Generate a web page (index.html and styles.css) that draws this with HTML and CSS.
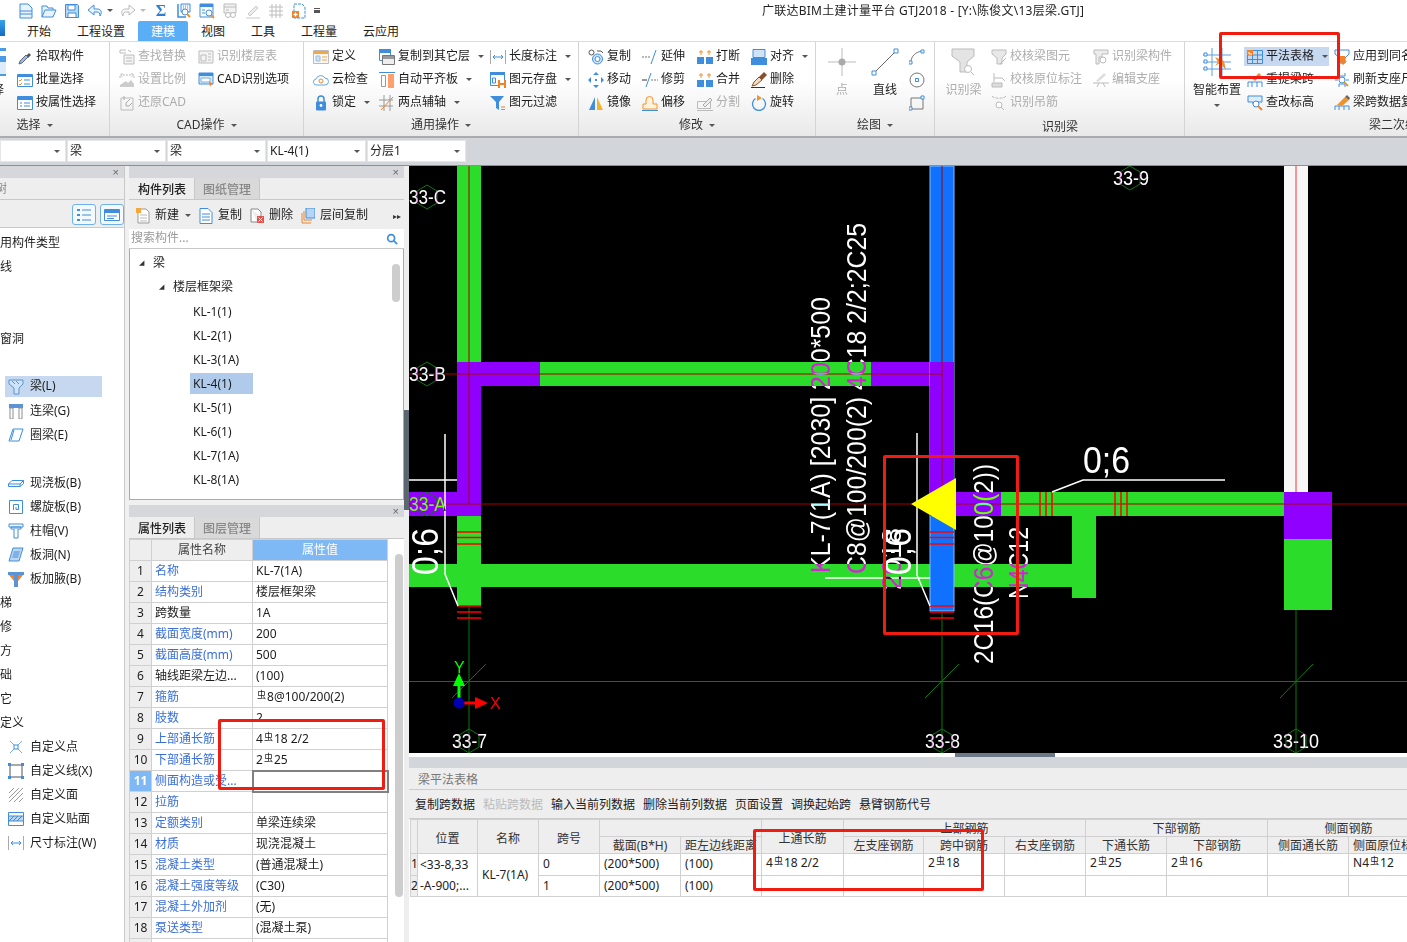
FILE: index.html
```html
<!DOCTYPE html>
<html lang="zh-CN">
<head>
<meta charset="utf-8">
<title>广联达BIM土建计量平台 GTJ2018</title>
<link rel="stylesheet" href="styles.css">
</head>
<body>
<svg class="sprite" aria-hidden="true">
  <defs>
    <symbol id="q-new" viewBox="0 0 16 16"><path d="M2 1h8l4 4v10H2z" fill="#eaf3fc" stroke="#3e8edd"/><path d="M2 8h12M2 11h12" stroke="#3e8edd"/></symbol>
    <symbol id="q-open" viewBox="0 0 16 16"><path d="M1 14V3h5l1 2h5v2M1 14l3-7h11l-3 7z" fill="#eaf3fc" stroke="#3e8edd"/></symbol>
    <symbol id="q-save" viewBox="0 0 16 16"><path d="M1.500 1.500h12l1 1v12h-13z" fill="#b8d8f5" stroke="#3e8edd"/><path d="M4 2h7v5H4zM4 10h8v4.500H4z" fill="#fff" stroke="#3e8edd"/></symbol>
    <symbol id="q-undo" viewBox="0 0 16 16"><path d="M7 2 1 7l6 5V9h3c2 0 3 1 3 4 2-3 2-7-3-7H7z" fill="#eaf3fc" stroke="#3e8edd"/></symbol>
    <symbol id="q-redo" viewBox="0 0 16 16"><path d="M9 2l6 5-6 5V9H6c-2 0-3 1-3 4-2-3-2-7 3-7h3z" fill="#fafafa" stroke="#bbb"/></symbol>
    <symbol id="q-rep" viewBox="0 0 16 16"><path d="M2 1v13h8" fill="none" stroke="#3e8edd" stroke-width="1.500"/><path d="M5 1h9v8H5z" fill="#f4f8fc" stroke="#3e8edd"/><path d="M7 3h5M7 5h5" stroke="#d66" stroke-dasharray="1 1"/><circle cx="9" cy="9" r="3" fill="#fff" stroke="#3e8edd"/><path d="m11 11 3 3" stroke="#f0922e" stroke-width="2"/></symbol>
    <symbol id="q-find" viewBox="0 0 16 16"><path d="M1 1h13v13H1z" fill="#fff" stroke="#3e8edd"/><path d="M1 1h13v3H1z" fill="#3e8edd"/><path d="M3 7h3M3 10h3" stroke="#3e8edd"/><circle cx="10" cy="10" r="3" fill="#fff" stroke="#3e8edd"/><path d="m12 12 3 3" stroke="#f0922e" stroke-width="2"/></symbol>
    <symbol id="q-dis" viewBox="0 0 16 16"><path d="M2 1h12v9H2z" fill="#f2f2f2" stroke="#bbb"/><path d="M2 4h12M4 7h3" stroke="#bbb"/><circle cx="6" cy="12" r="2.500" fill="#fff" stroke="#bbb"/><circle cx="11" cy="12" r="2.500" fill="#fff" stroke="#bbb"/></symbol>
    <symbol id="q-pen" viewBox="0 0 16 16"><path d="m3 11 8-8 2 2-8 8zM1 15h14" fill="#eee" stroke="#c8c8c8"/></symbol>
    <symbol id="q-grid" viewBox="0 0 16 16"><path d="M1 4h14M1 8h14M1 12h14M4 1v14M8 1v14M12 1v14" stroke="#bdbdbd"/></symbol>
    <symbol id="q-add" viewBox="0 0 16 16"><path d="M3 1h8l3 3v11H3z" fill="#fff" stroke="#3e8edd" stroke-dasharray="3 1"/><path d="M1 8h7v7H1z" fill="#f0822a"/><path d="M4.500 9.500v4M2.500 11.500h4" stroke="#fff" stroke-width="1.300"/></symbol>

    <symbol id="i-drop" viewBox="0 0 16 16"><path d="m9 7 3-3 2 2-3 3z" fill="#555"/><path d="M9 6 3 12l-1 3 3-1 6-6z" fill="#8fc0ee" stroke="#667"/></symbol>
    <symbol id="i-batch" viewBox="0 0 16 16"><path d="M.500 2.500h15v12H.500z" fill="#fff" stroke="#3e8edd"/><path d="M1 3h14v2H1z" fill="#3e8edd"/><path d="m2 8 1 1 2-2M2 12l1 1 2-2" fill="none" stroke="#f0922e"/><path d="M7 8h6M7 12h6" stroke="#3e8edd"/></symbol>
    <symbol id="i-attr" viewBox="0 0 16 16"><path d="M.500 1.500h15v13H.500z" fill="#fff" stroke="#3e8edd"/><path d="M1 2h14v3H1z" fill="#3e8edd"/><path d="M3 8h2M3 11h2M7 8h6M7 11h6" stroke="#3e8edd"/></symbol>
    <symbol id="i-find" viewBox="0 0 16 16"><path d="M1 1h6M1 1v3h6M9 1l3 2" fill="none" stroke="#bbb"/><path d="M5 6h10v9H5z" fill="#f4f4f4" stroke="#bbb"/><path d="M7 9h6M7 12h6" stroke="#bbb"/></symbol>
    <symbol id="i-scale" viewBox="0 0 16 16"><path d="M1 15h14v-3l-3-4-3 3-2-2-6 4z" fill="#ccc"/><path d="M1 6V3h14v3M3 1v4M13 1v4" fill="none" stroke="#bbb" stroke-dasharray="2 1"/></symbol>
    <symbol id="i-restore" viewBox="0 0 16 16"><path d="M2 3h12v12H2z" fill="none" stroke="#bbb"/><path d="M11 4 7 8v3h3l3-3M5 1v4" fill="none" stroke="#aaa"/></symbol>
    <symbol id="i-floor" viewBox="0 0 16 16"><path d="M1 2h14v12H1z" fill="#f4f4f4" stroke="#bbb"/><path d="M3 6h5v6H3zM10 5h3M10 8h3M10 11h3" fill="none" stroke="#bbb"/></symbol>
    <symbol id="i-cad" viewBox="0 0 16 16"><path d="M1 1h14v11H1z" fill="#dcecfa" stroke="#3e8edd"/><path d="M1 1h14v3H1z" fill="#3e8edd"/><path d="M3 6h9v4H3z" fill="#fff" stroke="#7aaee0"/><path d="m11 9 4 3-2 1-1 2z" fill="#f0822a"/></symbol>
    <symbol id="i-def" viewBox="0 0 16 16"><path d="M.500 1.500h15v13H.500z" fill="#f7f7f7" stroke="#bbb"/><path d="M1 2h14v3H1z" fill="#f5a63c"/><path d="M3 7h4v5H3z" fill="#cfe3f6" stroke="#9bbfe0"/><path d="M9 8h5M9 11h5" stroke="#f5a63c"/></symbol>
    <symbol id="i-cloud" viewBox="0 0 16 16"><path d="M4 13a3 3 0 0 1-1-6 5 5 0 0 1 9-1 3.500 3.500 0 0 1 0 7z" fill="#fff" stroke="#60a8ea"/><circle cx="8" cy="9" r="2" fill="none" stroke="#f0822a"/></symbol>
    <symbol id="i-lock" viewBox="0 0 16 16"><path d="M5 7V4a3 3 0 0 1 6 0v3" fill="none" stroke="#3e8edd" stroke-width="1.500"/><rect x="3" y="6.500" width="10" height="9" rx="1" fill="#3e8edd"/><circle cx="8" cy="10.500" r="1.400" fill="#fff"/></symbol>
    <symbol id="i-copyfloor" viewBox="0 0 16 16"><path d="M.500.500h11v11H.500z" fill="#fff" stroke="#3e8edd"/><path d="M0 0h12v4H0z" fill="#3e8edd"/><path d="M3.500 6.500h12v9h-12z" fill="#eee" stroke="#777"/><path d="M4 7h11v3H4z" fill="#999"/></symbol>
    <symbol id="i-align" viewBox="0 0 16 16"><path d="M0 .500h16" stroke="#3e8edd"/><path d="M2.500 3.500h4v11h-4z" fill="#fff" stroke="#999"/><path d="M9 2h6v14H9z" fill="#ff9f6e"/></symbol>
    <symbol id="i-axis" viewBox="0 0 16 16"><path d="M0 5h14M0 11h14M5 0v16M11 0v16" stroke="#999"/><path d="m2 15 12-13" stroke="#f0822a"/></symbol>
    <symbol id="i-dim" viewBox="0 0 16 16"><path d="M.500 1v14M15.500 1v14" stroke="#aaa"/><path d="M3 8h10M3 8l2-2M3 8l2 2M13 8l-2-2M13 8l-2 2" fill="none" stroke="#3e8edd"/></symbol>
    <symbol id="i-store" viewBox="0 0 16 16"><path d="M.500.500h14v13h-14z" fill="#fff" stroke="#3e8edd"/><path d="M0 0h15v3H0z" fill="#3e8edd"/><path d="M2.500 6h3v5h-3z" fill="none" stroke="#3e8edd"/><path d="M8 8h8v8H8z" fill="#f0822a"/><path d="M10 8h4v3h-4zM10 13h4v3h-4z" fill="#fff"/></symbol>
    <symbol id="i-filter" viewBox="0 0 16 16"><path d="M0 1h14L9 7v8l-3-2V7z" fill="#3e8edd"/><path d="M11 12h4M11 14.500h4" stroke="#f0822a"/></symbol>
    <symbol id="i-copy" viewBox="0 0 16 16"><circle cx="3.500" cy="3.500" r="2.500" fill="none" stroke="#555"/><path d="M9 2h4l2 2" fill="none" stroke="#555"/><circle cx="9.500" cy="10" r="5" fill="#cfe3f6" stroke="#3e8edd"/><circle cx="9.500" cy="10" r="2.500" fill="#fff" stroke="#3e8edd"/></symbol>
    <symbol id="i-move" viewBox="0 0 16 16"><path d="M8 0l3 3H5zM8 16l3-3H5zM0 8l3-3v6zM16 8l-3-3v6z" fill="#3e8edd"/><path d="M7 7h2v2H7z" fill="#3e8edd"/></symbol>
    <symbol id="i-mirror" viewBox="0 0 16 16"><path d="M1 15 7 2v13z" fill="#3e8edd"/><path d="M9 2l6 13H9z" fill="#f5b32a"/></symbol>
    <symbol id="i-extend" viewBox="0 0 16 16"><path d="M0 8h9" stroke="#777" stroke-dasharray="2 1"/><path d="m9 15 5-14" stroke="#3e8edd"/></symbol>
    <symbol id="i-trim" viewBox="0 0 16 16"><path d="M0 8h5" stroke="#333"/><path d="M9 8h7" stroke="#777" stroke-dasharray="2 1"/><path d="M4 15 9 1" stroke="#3e8edd"/></symbol>
    <symbol id="i-offset" viewBox="0 0 16 16"><path d="M1 14V9h3V5a3 3 0 0 1 7 0v4h4v5z" fill="#fff3dc" stroke="#f0922e"/><path d="M0 15.500h16" stroke="#3e8edd"/></symbol>
    <symbol id="i-break" viewBox="0 0 16 16"><path d="M0 8h7v7H0zM9 8h7v7H9z" fill="#3e8edd"/><path d="M4 1v5M2 3h4M12 1v5M10 3h4" stroke="#f0922e"/></symbol>
    <symbol id="i-split" viewBox="0 0 16 16"><path d="M.500 6.500h13v7h-13zM0 15.500h16" fill="none" stroke="#bbb"/><path d="m6 10 7-7 2 2-7 7z" fill="#eee" stroke="#aaa"/></symbol>
    <symbol id="i-alignb" viewBox="0 0 16 16"><path d="M2 .500h12v8H2z" fill="#cfe3f6" stroke="#3e8edd"/><path d="M0 9h16v7H0z" fill="#3e8edd"/></symbol>
    <symbol id="i-del" viewBox="0 0 16 16"><path d="m8 5 5-5 3 3-5 5z" fill="#8a4f2a"/><path d="M8 5 3 10l-2 4 4-1 6-5z" fill="#f4dcc0" stroke="#8a4f2a"/><path d="M0 15.500h14" stroke="#333"/></symbol>
    <symbol id="i-rot" viewBox="0 0 16 16"><path d="M4.500 3.500a6.500 6.500 0 1 0 7 0" fill="none" stroke="#3e8edd" stroke-width="1.300"/><path d="M6 0l5 3-5 3z" fill="#f0922e"/></symbol>

    <symbol id="b-point" viewBox="0 0 28 28"><path d="M14 0v28M0 14h28" stroke="#bbb"/><circle cx="14" cy="14" r="3.500" fill="#aaa"/></symbol>
    <symbol id="b-line" viewBox="0 0 28 28"><path d="M3 25 25 3" stroke="#666"/><path d="M1 23h4v4H1zM23 1h4v4h-4z" fill="#fff" stroke="#3e8edd"/></symbol>
    <symbol id="i-arc" viewBox="0 0 16 16"><path d="M2 13C2 7 7 3 13 2" fill="none" stroke="#777"/><path d="M0 12h3v3H0zM12 1h3v3h-3z" fill="#fff" stroke="#3e8edd"/></symbol>
    <symbol id="i-circle" viewBox="0 0 16 16"><circle cx="8" cy="8" r="7" fill="none" stroke="#777"/><path d="M6.500 6.500h3v3h-3z" fill="#fff" stroke="#3e8edd"/></symbol>
    <symbol id="i-rect" viewBox="0 0 16 16"><path d="M2 3h12v11H2z" fill="none" stroke="#777"/><path d="M0 12h3v3H0zM12 1h3v3h-3z" fill="#fff" stroke="#3e8edd"/></symbol>
    <symbol id="b-recog" viewBox="0 0 28 28"><path d="M2 1h22v7l-7 6v10h-7V14L2 8z" fill="#e4e4e4" stroke="#bbb"/><circle cx="18" cy="21" r="3.500" fill="#fff" stroke="#bbb"/><path d="m21 24 3 3" stroke="#bbb"/></symbol>
    <symbol id="i-chk" viewBox="0 0 16 16"><path d="M1 1h14v4l-4 4v6H6V9L1 5z" fill="#e8e8e8" stroke="#bbb"/><path d="M9 15l6-6" stroke="#bbb"/></symbol>
    <symbol id="i-chk2" viewBox="0 0 16 16"><path d="M1 11h10v4H1z" fill="#ddd" stroke="#bbb"/><path d="M3 10V1M3 6h8l3 3" fill="none" stroke="#bbb"/></symbol>
    <symbol id="i-hang" viewBox="0 0 16 16"><path d="M1 1c2 3 12 3 14 0" fill="none" stroke="#bbb" stroke-dasharray="3 1"/><circle cx="8" cy="10" r="3" fill="#fff" stroke="#bbb"/><path d="m10 12 3 3" stroke="#bbb"/></symbol>
    <symbol id="i-mem" viewBox="0 0 16 16"><path d="M1 1h14v4H9v3H6v7H3V5H1z" fill="#ececec" stroke="#bbb"/><circle cx="10" cy="11" r="3" fill="#fff" stroke="#bbb"/></symbol>
    <symbol id="i-sup" viewBox="0 0 16 16"><path d="M0 11h16M4 15l2-4M12 15l-2-4" stroke="#bbb"/><path d="m3 9 8-8 2 2-8 7z" fill="#ddd"/></symbol>
    <symbol id="b-smart" viewBox="0 0 28 28"><path d="M0 7h28M0 14h28M0 21h28M9 0v28M19 0v28" stroke="#5aa0e4"/><path d="M1 5h3v3H1zM1 12h3v3H1zM1 19h3v3H1z" fill="#fff" stroke="#3e8edd"/><path d="M12 9l3 5-3 4 5-3 6 7-2-9z" fill="#f0922e"/></symbol>
    <symbol id="i-table" viewBox="0 0 16 16"><path d="M.500 1.500h15v13H.500zM5.500 1.500v13M10.500 1.500v13M.500 6h15M.500 10.500h15" fill="none" stroke="#3e8edd"/><path d="M0 1h6v5H0z" fill="#f0822a"/><path d="M2 3v2h3" fill="none" stroke="#fff"/></symbol>
    <symbol id="i-span" viewBox="0 0 16 16"><path d="m6 7 6-6 2 2-6 6z" fill="#f0822a"/><path d="M1 15v-5h14v5M5 10v5M10 10v5" fill="none" stroke="#3e8edd"/></symbol>
    <symbol id="i-height" viewBox="0 0 16 16"><path d="M1 1h14v6H9v5L6 9V7H1z" fill="#dcecfa" stroke="#3e8edd"/><circle cx="9" cy="9" r="3" fill="#fff" stroke="#3e8edd"/><path d="m11 11 4 4" stroke="#f0822a" stroke-width="2"/></symbol>
    <symbol id="i-apply" viewBox="0 0 16 16"><path d="M1 1h14v4l-4 4v5H6V9L1 5z" fill="#fff" stroke="#3e8edd"/><path d="M6 7h5v5h2l-4 4-4-4h1z" fill="#f0822a"/></symbol>
    <symbol id="i-refresh" viewBox="0 0 16 16"><path d="M5 1v3h6V1M1 8h3M12 8h3M5 15v-3h6v3" fill="none" stroke="#3e8edd"/><circle cx="8" cy="8" r="3" fill="#fff" stroke="#3e8edd"/><path d="m10 10 4 4" stroke="#f0922e" stroke-width="2"/></symbol>
    <symbol id="i-data" viewBox="0 0 16 16"><path d="M1 15v-4h14v4M5 11v4M10 11v4" fill="none" stroke="#3e8edd"/><path d="m3 10 8-8 4 3-7 6z" fill="#f0922e"/><path d="m11 2 2-2 3 3-1 2z" fill="#666"/></symbol>

    <symbol id="n-beam" viewBox="0 0 16 16"><path d="M1 1h14v4l-4 4v6H6V9L1 5z" fill="#cfe3f6" stroke="#5b93d6"/><path d="M4 2l3 3M8 2l3 3" stroke="#5b93d6"/></symbol>
    <symbol id="n-link" viewBox="0 0 16 16"><path d="M1 1h14v4H1z" fill="#5b93d6"/><path d="M2 5h3v11H2zM11 5h3v11h-3z" fill="#fff" stroke="#8a8f96"/></symbol>
    <symbol id="n-ring" viewBox="0 0 16 16"><path d="M5 2h10l-4 12H1z" fill="#fff" stroke="#3e8edd"/><path d="M6 3 3 13" stroke="#3e8edd"/></symbol>
    <symbol id="n-slab" viewBox="0 0 16 16"><path d="M.500 9 4 5.500h11.500v3L12 11.500H.500zM.500 9H12v2.500M12 9l3.500-3.500" fill="#fff" stroke="#3e8edd"/></symbol>
    <symbol id="n-spiral" viewBox="0 0 16 16"><path d="M1.500 1.500h13v13h-13zM5.500 11V5.500h5v5H8V8" fill="none" stroke="#3e8edd"/></symbol>
    <symbol id="n-cap" viewBox="0 0 16 16"><path d="M1 1h14v3H1zM3 4h10v2H3z" fill="#fff" stroke="#3e8edd"/><path d="M6 6v9h4V6" fill="#fff" stroke="#3e8edd"/></symbol>
    <symbol id="n-hole" viewBox="0 0 16 16"><path d="M5 1h10l-4 13H1z" fill="#bcd6f1" stroke="#3e8edd"/><path d="M6 4h6l-2 7H4z" fill="#7fb0e6"/></symbol>
    <symbol id="n-haunch" viewBox="0 0 16 16"><path d="M0 1h16v3H0zM6 4h4v12H6z" fill="#5b93d6"/><path d="M1 4h5v6zM15 4h-5v6z" fill="#f0822a"/></symbol>
    <symbol id="n-cpt" viewBox="0 0 16 16"><path d="m2 2 12 12M14 2 2 14" stroke="#7aaee0"/><rect x="6" y="6" width="4" height="4" fill="#fff" stroke="#3e8edd"/></symbol>
    <symbol id="n-cln" viewBox="0 0 16 16"><path d="M2 2h12v12H2z" fill="none" stroke="#555"/><path d="M0 0h3v3H0zM13 0h3v3h-3zM0 13h3v3H0zM13 13h3v3h-3z" fill="#3e8edd"/></symbol>
    <symbol id="n-cfc" viewBox="0 0 16 16"><path d="M1 6l5-5M1 11 11 1M1 15 15 1M6 15l9-9M11 15l4-4" stroke="#999"/></symbol>
    <symbol id="n-cst" viewBox="0 0 16 16"><path d="M.500 1.500h15v13H.500z" fill="#fff" stroke="#3e8edd"/><path d="M1 5h14v5H1z" fill="#bcd6f1"/><path d="M1 10 6 5M5 10l5-5M9 10l5-5" stroke="#777"/><path d="M1 5h14M1 10h14" stroke="#3e8edd"/></symbol>

    <symbol id="t-new" viewBox="0 0 14 16"><path d="M2 1h8l3 3v11H2z" fill="#fff" stroke="#999"/><path d="M4 7h7M4 10h7M4 13h7" stroke="#bbb"/><path d="M0 0h5v5H0z" fill="#f5a63c"/></symbol>
    <symbol id="t-copy" viewBox="0 0 14 16"><path d="M1 .500h8l4 4v11H1z" fill="#fff" stroke="#3e8edd"/><path d="M3 6h8M3 9h8M3 12h8" stroke="#3e8edd"/></symbol>
    <symbol id="t-del" viewBox="0 0 14 16"><path d="M1 1h7l3 3v4M1 1v13h6" fill="#fff" stroke="#888"/><path d="M7 8h7v7H7z" fill="#e0524a"/><path d="m8.500 9.500 4 4M12.500 9.500l-4 4" stroke="#fff"/></symbol>
    <symbol id="t-layer" viewBox="0 0 14 16"><path d="M1 5v10h9" fill="none" stroke="#f0822a"/><path d="M3 3v9h8" fill="none" stroke="#f0822a"/><path d="M5 0h9v10H5z" fill="#b8d4f4" stroke="#3e8edd"/></symbol>
    <symbol id="t-list" viewBox="0 0 16 16"><path d="M1 3h3M1 8h3M1 13h3" stroke="#3e8edd" stroke-width="2"/><path d="M6 3h9M6 8h9M6 13h9" stroke="#3e8edd"/></symbol>
    <symbol id="t-win" viewBox="0 0 16 16"><path d="M.500 2.500h15v11H.500z" fill="#fff" stroke="#3e8edd"/><path d="M1 3h14v3H1z" fill="#3e8edd"/><path d="M3 9h10M3 11.500h7" stroke="#3e8edd"/></symbol>
    <symbol id="t-search" viewBox="0 0 14 14"><circle cx="6" cy="6" r="4" fill="none" stroke="#3e8edd" stroke-width="2"/><path d="m9 9 4 4" stroke="#3e8edd" stroke-width="2"/></symbol>
  </defs>
</svg>

<div class="app">
  <header class="topbar">
    <div class="qa">
      <svg class="ic"><use href="#q-new"/></svg>
      <svg class="ic"><use href="#q-open"/></svg>
      <svg class="ic"><use href="#q-save"/></svg>
      <svg class="ic"><use href="#q-undo"/></svg><i class="cr qc"></i>
      <svg class="ic"><use href="#q-redo"/></svg><i class="cr qc dim"></i>
      <span class="sigma">Σ</span>
      <svg class="ic"><use href="#q-rep"/></svg>
      <svg class="ic"><use href="#q-find"/></svg>
      <svg class="ic"><use href="#q-dis"/></svg>
      <svg class="ic"><use href="#q-pen"/></svg>
      <svg class="ic"><use href="#q-grid"/></svg>
      <svg class="ic"><use href="#q-add"/></svg>
      <span class="qmore"></span>
    </div>
    <div class="title">广联达BIM土建计量平台 GTJ2018 - [Y:\陈俊文\13层梁.GTJ]</div>
  </header>

  <nav class="tabs">
    <span class="logo"></span>
    <a class="tab">开始</a><a class="tab">工程设置</a><a class="tab on">建模</a><a class="tab">视图</a><a class="tab">工具</a><a class="tab">工程量</a><a class="tab">云应用</a>
  </nav>

  <section class="ribbon">
    <div class="grp g1">
      <div class="body">
        <div class="bigclip"><svg class="bigclip-ic" viewBox="0 0 6 28"><path d="M0 0h6v28H0z" fill="#4a9be6"/><path d="M0 3h6v5H0z" fill="#fff"/><path d="M0 14h6v12H0z" fill="#dcecfa"/></svg><span class="bigclip-t">择</span></div>
        <div class="col">
          <div class="it"><svg class="ic"><use href="#i-drop"/></svg>拾取构件</div>
          <div class="it"><svg class="ic"><use href="#i-batch"/></svg>批量选择</div>
          <div class="it"><svg class="ic"><use href="#i-attr"/></svg>按属性选择</div>
        </div>
      </div>
      <div class="cap cap1">选择<i class="cr"></i></div>
    </div>

    <div class="grp g2">
      <div class="body">
        <div class="col w79 off">
          <div class="it"><svg class="ic"><use href="#i-find"/></svg>查找替换</div>
          <div class="it"><svg class="ic"><use href="#i-scale"/></svg>设置比例</div>
          <div class="it"><svg class="ic"><use href="#i-restore"/></svg>还原CAD</div>
        </div>
        <div class="col">
          <div class="it off"><svg class="ic"><use href="#i-floor"/></svg>识别楼层表</div>
          <div class="it"><svg class="ic"><use href="#i-cad"/></svg>CAD识别选项</div>
        </div>
      </div>
      <div class="cap">CAD操作<i class="cr"></i></div>
    </div>

    <div class="grp g3">
      <div class="body">
        <div class="col w66">
          <div class="it"><svg class="ic"><use href="#i-def"/></svg>定义</div>
          <div class="it"><svg class="ic"><use href="#i-cloud"/></svg>云检查</div>
          <div class="it"><svg class="ic"><use href="#i-lock"/></svg>锁定<i class="cr"></i></div>
        </div>
        <div class="col w111">
          <div class="it"><svg class="ic"><use href="#i-copyfloor"/></svg>复制到其它层<i class="cr"></i></div>
          <div class="it"><svg class="ic"><use href="#i-align"/></svg>自动平齐板<i class="cr"></i></div>
          <div class="it"><svg class="ic"><use href="#i-axis"/></svg>两点辅轴<i class="cr"></i></div>
        </div>
        <div class="col">
          <div class="it"><svg class="ic"><use href="#i-dim"/></svg>长度标注<i class="cr"></i></div>
          <div class="it"><svg class="ic"><use href="#i-store"/></svg>图元存盘<i class="cr"></i></div>
          <div class="it"><svg class="ic"><use href="#i-filter"/></svg>图元过滤</div>
        </div>
      </div>
      <div class="cap">通用操作<i class="cr"></i></div>
    </div>

    <div class="grp g4">
      <div class="body">
        <div class="col w54">
          <div class="it"><svg class="ic"><use href="#i-copy"/></svg>复制</div>
          <div class="it"><svg class="ic"><use href="#i-move"/></svg>移动</div>
          <div class="it"><svg class="ic"><use href="#i-mirror"/></svg>镜像</div>
        </div>
        <div class="col w55">
          <div class="it"><svg class="ic"><use href="#i-extend"/></svg>延伸</div>
          <div class="it"><svg class="ic"><use href="#i-trim"/></svg>修剪</div>
          <div class="it"><svg class="ic"><use href="#i-offset"/></svg>偏移</div>
        </div>
        <div class="col w54">
          <div class="it"><svg class="ic"><use href="#i-break"/></svg>打断</div>
          <div class="it"><svg class="ic"><use href="#i-break"/></svg>合并</div>
          <div class="it off"><svg class="ic"><use href="#i-split"/></svg>分割</div>
        </div>
        <div class="col">
          <div class="it"><svg class="ic"><use href="#i-alignb"/></svg>对齐<i class="cr"></i></div>
          <div class="it"><svg class="ic"><use href="#i-del"/></svg>删除</div>
          <div class="it"><svg class="ic"><use href="#i-rot"/></svg>旋转</div>
        </div>
      </div>
      <div class="cap">修改<i class="cr"></i></div>
    </div>

    <div class="grp g5">
      <div class="body">
        <div class="big w52 off"><svg class="bic"><use href="#b-point"/></svg><span>点</span></div>
        <div class="big w34"><svg class="bic"><use href="#b-line"/></svg><span>直线</span></div>
        <div class="col mini">
          <div class="it"><svg class="ic"><use href="#i-arc"/></svg></div>
          <div class="it"><svg class="ic"><use href="#i-circle"/></svg></div>
          <div class="it"><svg class="ic"><use href="#i-rect"/></svg></div>
        </div>
      </div>
      <div class="cap">绘图<i class="cr"></i></div>
    </div>

    <div class="grp g6">
      <div class="body">
        <div class="big w55 off"><svg class="bic"><use href="#b-recog"/></svg><span>识别梁</span></div>
        <div class="col w102 off">
          <div class="it"><svg class="ic"><use href="#i-chk"/></svg>校核梁图元</div>
          <div class="it"><svg class="ic"><use href="#i-chk2"/></svg>校核原位标注</div>
          <div class="it"><svg class="ic"><use href="#i-hang"/></svg>识别吊筋</div>
        </div>
        <div class="col off">
          <div class="it"><svg class="ic"><use href="#i-mem"/></svg>识别梁构件</div>
          <div class="it"><svg class="ic"><use href="#i-sup"/></svg>编辑支座</div>
        </div>
      </div>
      <div class="cap">识别梁</div>
    </div>

    <div class="grp g7">
      <div class="body">
        <div class="big w60"><svg class="bic"><use href="#b-smart"/></svg><span>智能布置</span><i class="cr bigcr"></i></div>
        <div class="col w87">
          <div class="it sel"><svg class="ic"><use href="#i-table"/></svg>平法表格<i class="cr"></i></div>
          <div class="it"><svg class="ic"><use href="#i-span"/></svg>重提梁跨</div>
          <div class="it"><svg class="ic"><use href="#i-height"/></svg>查改标高</div>
        </div>
        <div class="col">
          <div class="it"><svg class="ic"><use href="#i-apply"/></svg>应用到同名梁</div>
          <div class="it"><svg class="ic"><use href="#i-refresh"/></svg>刷新支座尺寸</div>
          <div class="it"><svg class="ic"><use href="#i-data"/></svg>梁跨数据复制</div>
        </div>
      </div>
      <div class="cap">梁二次编辑</div>
    </div>
  </section>

  <div class="combos">
    <div class="combo c1"><i class="cr"></i></div>
    <div class="combo">梁<i class="cr"></i></div>
    <div class="combo">梁<i class="cr"></i></div>
    <div class="combo">KL-4(1)<i class="cr"></i></div>
    <div class="combo">分层1<i class="cr"></i></div>
  </div>

  <main class="work">
    <aside class="nav">
      <div class="band"><span class="x">×</span></div>
      <div class="navtab"><span class="clipl">树</span></div>
      <div class="navtools">
        <span class="tbtn"><svg class="ic"><use href="#t-list"/></svg></span>
        <span class="tbtn"><svg class="ic"><use href="#t-win"/></svg></span>
      </div>
      <ul class="navlist">
        <li class="cat">用构件类型</li>
        <li class="cat">线</li>
        <li class="cat"></li>
        <li class="cat"></li>
        <li class="cat">窗洞</li>
        <li class="cat"></li>
        <li class="ni on"><svg class="ic"><use href="#n-beam"/></svg>梁(L)</li>
        <li class="ni"><svg class="ic"><use href="#n-link"/></svg>连梁(G)</li>
        <li class="ni"><svg class="ic"><use href="#n-ring"/></svg>圈梁(E)</li>
        <li class="cat"></li>
        <li class="ni"><svg class="ic"><use href="#n-slab"/></svg>现浇板(B)</li>
        <li class="ni"><svg class="ic"><use href="#n-spiral"/></svg>螺旋板(B)</li>
        <li class="ni"><svg class="ic"><use href="#n-cap"/></svg>柱帽(V)</li>
        <li class="ni"><svg class="ic"><use href="#n-hole"/></svg>板洞(N)</li>
        <li class="ni"><svg class="ic"><use href="#n-haunch"/></svg>板加腋(B)</li>
        <li class="cat">梯</li>
        <li class="cat">修</li>
        <li class="cat">方</li>
        <li class="cat">础</li>
        <li class="cat">它</li>
        <li class="cat">定义</li>
        <li class="ni"><svg class="ic"><use href="#n-cpt"/></svg>自定义点</li>
        <li class="ni"><svg class="ic"><use href="#n-cln"/></svg>自定义线(X)</li>
        <li class="ni"><svg class="ic"><use href="#n-cfc"/></svg>自定义面</li>
        <li class="ni"><svg class="ic"><use href="#n-cst"/></svg>自定义贴面</li>
        <li class="ni"><svg class="ic"><use href="#i-dim"/></svg>尺寸标注(W)</li>
      </ul>
    </aside>

    <div class="mid">
      <section class="plist">
        <div class="band"><span class="x">×</span></div>
        <div class="ptabs"><span class="ptab on">构件列表</span><span class="ptab">图纸管理</span></div>
        <div class="ptools">
          <span class="pt"><svg class="ic14"><use href="#t-new"/></svg>新建<i class="cr"></i></span>
          <span class="pt"><svg class="ic14"><use href="#t-copy"/></svg>复制</span>
          <span class="pt"><svg class="ic14"><use href="#t-del"/></svg>删除</span>
          <span class="pt"><svg class="ic14"><use href="#t-layer"/></svg>层间复制</span>
          <span class="more">▸▸</span>
        </div>
        <div class="search"><span>搜索构件...</span><svg class="ic12"><use href="#t-search"/></svg></div>
        <div class="tree">
          <ul class="treelist">
            <li class="l0"><i class="tri">◢</i>梁</li>
            <li class="l1"><i class="tri">◢</i>楼层框架梁</li>
            <li class="l2"><span>KL-1(1)</span></li>
            <li class="l2"><span>KL-2(1)</span></li>
            <li class="l2"><span>KL-3(1A)</span></li>
            <li class="l2 on"><span>KL-4(1)</span></li>
            <li class="l2"><span>KL-5(1)</span></li>
            <li class="l2"><span>KL-6(1)</span></li>
            <li class="l2"><span>KL-7(1A)</span></li>
            <li class="l2"><span>KL-8(1A)</span></li>
            <li class="l2"><span>KL-9(1)</span></li>
          </ul>
          <div class="thumb t1"></div>
        </div>
      </section>

      <section class="props">
        <div class="band"><span class="x">×</span></div>
        <div class="ptabs"><span class="ptab on">属性列表</span><span class="ptab">图层管理</span></div>
        <div class="propwrap">
          <table class="ptable">
            <colgroup><col class="pc1"><col class="pc2"><col class="pc3"></colgroup>
            <tr class="ph"><th></th><th>属性名称</th><th class="val">属性值</th></tr>
            <tr><td class="n">1</td><td class="lk">名称</td><td>KL-7(1A)</td></tr>
            <tr><td class="n">2</td><td class="lk">结构类别</td><td>楼层框架梁</td></tr>
            <tr><td class="n">3</td><td>跨数量</td><td>1A</td></tr>
            <tr><td class="n">4</td><td class="lk">截面宽度(mm)</td><td>200</td></tr>
            <tr><td class="n">5</td><td class="lk">截面高度(mm)</td><td>500</td></tr>
            <tr><td class="n">6</td><td>轴线距梁左边...</td><td>(100)</td></tr>
            <tr><td class="n">7</td><td class="lk">箍筋</td><td><span class="rb">虫</span>8@100/200(2)</td></tr>
            <tr><td class="n">8</td><td class="lk">肢数</td><td>2</td></tr>
            <tr><td class="n">9</td><td class="lk">上部通长筋</td><td>4<span class="rb">虫</span>18 2/2</td></tr>
            <tr><td class="n">10</td><td class="lk">下部通长筋</td><td>2<span class="rb">虫</span>25</td></tr>
            <tr><td class="n cur">11</td><td class="lk">侧面构造或受...</td><td class="edit"></td></tr>
            <tr><td class="n">12</td><td class="lk">拉筋</td><td></td></tr>
            <tr><td class="n">13</td><td class="lk">定额类别</td><td>单梁连续梁</td></tr>
            <tr><td class="n">14</td><td class="lk">材质</td><td>现浇混凝土</td></tr>
            <tr><td class="n">15</td><td class="lk">混凝土类型</td><td>(普通混凝土)</td></tr>
            <tr><td class="n">16</td><td class="lk">混凝土强度等级</td><td>(C30)</td></tr>
            <tr><td class="n">17</td><td class="lk">混凝土外加剂</td><td>(无)</td></tr>
            <tr><td class="n">18</td><td class="lk">泵送类型</td><td>(混凝土泵)</td></tr>
            <tr><td class="n"></td><td></td><td></td></tr>
          </table>
          <div class="track"><div class="thumb t2"></div></div>
        </div>
      </section>
    </div>

    <div class="split"><span class="grip"></span></div>

    <div class="view">
      <svg class="cad" viewBox="409 166 998 587">
        <defs><polygon id="hex" points="0,-12 10,-6 10,6 0,12 -10,6 -10,-6" fill="none" stroke="#0b7a0b"/></defs>
        <rect x="409" y="166" width="998" height="587" fill="#000"/>
        <g class="grid">
          <path d="M409 681.500H1407M469 504V753M942 504V753M1296 504V753M452 698l34-34M925 698l34-34M1280 698l33-34"/>
        </g>
        <g class="beams">
          <rect class="bg" x="457" y="166" width="24" height="196"/>
          <rect class="bg" x="540" y="362" width="331" height="24"/>
          <rect class="bp" x="457" y="362" width="83" height="24"/>
          <rect class="bp" x="871" y="362" width="59" height="24"/>
          <rect class="bp" x="457" y="386" width="24" height="130"/>
          <rect class="bp" x="409" y="492" width="72" height="24"/>
          <rect class="bg" x="457" y="516" width="24" height="90"/>
          <rect class="bg" x="409" y="564" width="663" height="23"/>
          <rect class="bg" x="1072" y="516" width="24" height="82"/>
          <rect class="bg" x="1001" y="492" width="283" height="24"/>
          <rect class="bp" x="954" y="492" width="47" height="24"/>
          <rect class="bb" x="930" y="166" width="24" height="445"/>
          <rect class="bp" x="930" y="362" width="24" height="154"/>
          <rect class="bw" x="1284" y="166" width="24" height="326"/>
          <rect class="bp" x="1284" y="492" width="48" height="47"/>
          <rect class="bg" x="1284" y="539" width="48" height="71"/>
        </g>
        <path class="redd" d="M409 374H942M409 504H1407M469 166V504M942 166V504"/>
        <path class="redb" d="M1296 166V492"/>
        <path class="ticks" d="M457 532h24M457 537.500h24M457 544h24M457 606h24M457 612h24M457 618h24M930 532h24M930 537.500h24M930 544h24M930 606h24M930 612h24M930 618h24M1040 492v24M1046 492v24M1052 492v24M1115 492v24M1121 492v24M1127 492v24"/>
        <path class="wl" d="M445 434V574L458 606M409 480H457M917 433V575L930 606M825 578H930M1052 492L1083 480H1225"/>
        <polygon class="tri-y" points="911,504 956,478 956,530"/>
        <use href="#hex" x="427" y="197"/><use href="#hex" x="427" y="374"/><use href="#hex" x="427" y="504"/>
        <use href="#hex" x="469" y="741"/><use href="#hex" x="942" y="741"/><use href="#hex" x="1296" y="741"/><use href="#hex" x="1130" y="178"/>
        <g class="ax">
          <text x="409" y="204" textLength="37" lengthAdjust="spacingAndGlyphs">33-C</text>
          <text x="409" y="381" textLength="37" lengthAdjust="spacingAndGlyphs">33-B</text>
          <text x="409" y="511" textLength="37" lengthAdjust="spacingAndGlyphs">33-A</text>
          <text x="452" y="748" textLength="35" lengthAdjust="spacingAndGlyphs">33-7</text>
          <text x="925" y="748" textLength="35" lengthAdjust="spacingAndGlyphs">33-8</text>
          <text x="1273" y="748" textLength="46" lengthAdjust="spacingAndGlyphs">33-10</text>
          <text x="1113" y="185" textLength="36" lengthAdjust="spacingAndGlyphs">33-9</text>
        </g>
        <g class="dimt">
          <text transform="translate(830 573) rotate(-90)" textLength="276" lengthAdjust="spacingAndGlyphs">KL-7(1A) [2030] 200*500</text>
          <text transform="translate(866 574) rotate(-90)" textLength="351" lengthAdjust="spacingAndGlyphs">C8@100/200(2) 4C18 2/2;2C25</text>
          <text transform="translate(993 664) rotate(-90)" textLength="200" lengthAdjust="spacingAndGlyphs">2C16(C6@100(2))</text>
          <text transform="translate(1028 599) rotate(-90)" textLength="72" lengthAdjust="spacingAndGlyphs">N4C12</text>
          <text transform="translate(901 590) rotate(-90)" textLength="62" lengthAdjust="spacingAndGlyphs">2018</text>
        </g>
        <g class="big06">
          <text transform="translate(438 575) rotate(-90)" textLength="47" lengthAdjust="spacingAndGlyphs">0;6</text>
          <text transform="translate(911 575) rotate(-90)" textLength="47" lengthAdjust="spacingAndGlyphs">0;6</text>
          <text x="1083" y="473" textLength="47" lengthAdjust="spacingAndGlyphs">0;6</text>
        </g>
        <g>
          <path class="axg" d="M459 703V684"/><polygon class="axgf" points="459,673 465,686 453,686"/>
          <path class="axr" d="M459 703H478"/><polygon class="axrf" points="488,703 475,697 475,709"/>
          <circle class="axb" cx="459" cy="703" r="5.500"/>
          <text class="lblg" x="454" y="673">Y</text>
          <text class="lblr" x="490" y="709">X</text>
        </g>
      </svg>
      <div class="hbar"><span class="hgrip"></span></div>
      <div class="band2"></div>
      <div class="bt-title">梁平法表格</div>
      <div class="bt-tools">
        <span>复制跨数据</span><span class="off">粘贴跨数据</span><span>输入当前列数据</span><span>删除当前列数据</span><span>页面设置</span><span>调换起始跨</span><span>悬臂钢筋代号</span>
      </div>
      <div class="bt-wrap">
        <table class="btable">
          <colgroup>
            <col class="w7"><col class="w60"><col class="w61"><col class="w61"><col class="w81"><col class="w81"><col class="w82"><col class="w80"><col class="w81"><col class="w81"><col class="w81"><col class="w101"><col class="w81"><col class="w81">
          </colgroup>
          <tr class="hd1">
            <th rowspan="2"></th><th rowspan="2" class="rs">位置</th><th rowspan="2" class="rs">名称</th><th rowspan="2" class="rs">跨号</th>
            <th colspan="2"></th><th rowspan="2" class="rs">上通长筋</th><th colspan="3">上部钢筋</th><th colspan="2">下部钢筋</th><th colspan="2">侧面钢筋</th>
          </tr>
          <tr class="hd2">
            <th>截面(B*H)</th><th>距左边线距离</th><th>左支座钢筋</th><th>跨中钢筋</th><th>右支座钢筋</th><th>下通长筋</th><th>下部钢筋</th><th>侧面通长筋</th><th>侧面原位标注</th>
          </tr>
          <tr class="dr">
            <td class="rn">1</td><td rowspan="2" class="pos">&lt;33-8,33 -A-900;...</td><td rowspan="2">KL-7(1A)</td><td>0</td><td>(200*500)</td><td>(100)</td><td class="up">4<span class="rb">虫</span>18 2/2</td><td></td><td class="up">2<span class="rb">虫</span>18</td><td></td><td class="up">2<span class="rb">虫</span>25</td><td class="up">2<span class="rb">虫</span>16</td><td></td><td class="up">N4<span class="rb">虫</span>12</td>
          </tr>
          <tr class="dr">
            <td class="rn">2</td><td>1</td><td>(200*500)</td><td>(100)</td><td></td><td></td><td></td><td></td><td></td><td></td><td></td><td></td>
          </tr>
        </table>
      </div>
    </div>
  </main>

  <div class="mark m1"></div>
  <div class="mark m2"></div>
  <div class="mark m3"></div>
  <div class="mark m4"></div>
</div>
</body>
</html>
```

FILE: styles.css
```css
* { box-sizing: border-box; }
html, body { margin: 0; padding: 0; background: #fff; }
body { font: 12px/1.2 "Noto Sans", "Noto Sans CJK SC", sans-serif; color: #1c1c1c; overflow: hidden; }
.sprite { display: none; }
ul { list-style: none; margin: 0; padding: 0; }
i { font-style: normal; }

.app { position: relative; width: 1407px; height: 942px; overflow: hidden; display: flex; flex-direction: column; background: #f0f0f0; }
.ic { width: 16px; height: 16px; flex: none; display: block; }
.ic14 { width: 14px; height: 16px; flex: none; }
.ic12 { width: 12px; height: 12px; flex: none; }
.cr { display: inline-block; width: 0; height: 0; border: 3px solid transparent; border-top: 3.5px solid #555; border-bottom: 0; margin-left: 5px; flex: none; }

.topbar { height: 20px; display: flex; background: #fff; }
.qa { width: 762px; padding: 1px 0 0 18px; display: flex; align-items: center; gap: 7px; height: 20px; }
.qc { margin: 0 0 0 -3px; }
.qc.dim { border-top-color: #bbb; }
.sigma { width: 16px; text-align: center; font: bold 16px "Liberation Serif", serif; color: #2f7fd0; }
.qmore { width: 6px; height: 5px; border-top: 1px solid #555; border-bottom: 3px solid #555; }
.title { line-height: 21px; color: #222; white-space: nowrap; letter-spacing: .24px; }

.tabs { height: 21px; display: flex; background: #fff; padding-left: 9px; position: relative; }
.logo { width: 5px; margin-left: -9px; margin-right: 9px; height: 16px; background: linear-gradient(#37a3ea, #1669c4); }
.tab { padding: 0 13px; line-height: 23px; height: 21px; color: #222; font-size: 12px; }
.tab.on { background: #5aaef5; color: #fff; border-radius: 2px 2px 0 0; margin-top: 1px; height: 20px; line-height: 21px; }

.ribbon { height: 97px; display: flex; background: linear-gradient(#fff 40%, #e9e9e9); border-top: 1px solid #dcdcdc; border-bottom: 2px solid #a9abae; overflow: hidden; }
.grp { display: flex; flex-direction: column; flex: none; border-right: 1px solid #d4d4d4; }
.g1 { width: 110px; }
.g2 { width: 194px; padding-left: 9px; }
.g3 { width: 275px; padding-left: 9px; }
.g4 { width: 237px; padding-left: 9px; }
.g5 { width: 119px; }
.g6 { width: 250px; padding-left: 1px; }
.g7 { width: 426px; border-right: 0; padding-left: 2px; }
.body { height: 72px; padding-top: 3px; display: flex; flex: none; }
.col { display: flex; flex-direction: column; flex: none; }
.w79 { width: 79px; } .w66 { width: 66px; } .w111 { width: 111px; } .w54 { width: 54px; } .w55 { width: 55px; } .w102 { width: 102px; } .w87 { width: 87px; }
.it { height: 23px; display: flex; align-items: center; gap: 3px; white-space: nowrap; }
.off, .off .it { color: #adadad; }
.it.sel { height: 19px; margin: 2px 0 2px -3px; padding-left: 3px; width: 85px; background: #c6d9f0; }
.it.sel .cr { margin-left: 5px; }
.cap { height: 22px; display: flex; align-items: center; justify-content: center; color: #333; white-space: nowrap; }
.cap .cr { margin-left: 6px; }
.g1 .cap1 { padding-right: 40px; }
.g2 .cap, .g3 .cap, .g4 .cap { margin-left: -9px; }
.g6 .cap { padding-top: 4px; }
.big { display: flex; flex-direction: column; align-items: center; flex: none; padding-top: 3px; white-space: nowrap; }
.bic { width: 28px; height: 28px; flex: none; display: block; }
.big span { margin-top: 7px; }
.bigcr { margin: 7px 0 0; }
.w52 { width: 52px; } .w34 { width: 34px; } .w60 { width: 60px; }
.mini { margin-left: 7px; }
.bigclip { width: 17px; flex: none; display: flex; flex-direction: column; padding-top: 3px; overflow: hidden; }
.bigclip-ic { width: 6px; height: 28px; display: block; }
.bigclip-t { margin: 7px 0 0 -8px; }

.combos { height: 28px; background: #d2d5da; border-bottom: 1px solid #8c9096; display: flex; gap: 1px; padding-top: 2px; }
.combo { width: 99px; height: 22px; background: #fff; padding: 0 5px 0 2px; display: flex; align-items: center; justify-content: space-between; border: 1px solid #e6e6e6; }
.combo.c1 { width: 66px; justify-content: flex-end; }
.combo .cr { margin: 0; }

.work { display: flex; flex: 1; min-height: 0; }
.band { height: 12px; background: #d5d7db; display: flex; justify-content: flex-end; padding-right: 5px; }
.x { font: 11px/12px "Liberation Sans", sans-serif; color: #666; }

.nav { width: 125px; flex: none; background: #fff; border-right: 1px solid #c8c8c8; }
.navtab { height: 22px; background: #eee; border-bottom: 1px solid #c8c8c8; line-height: 22px; color: #888; overflow: hidden; }
.clipl { display: block; margin-left: -5px; }
.navtools { height: 28px; background: #eee; border-bottom: 1px solid #c8c8c8; display: flex; justify-content: flex-end; gap: 4px; padding: 4px 0 0; }
.tbtn { width: 24px; height: 21px; border: 1px solid #6fb0ee; border-radius: 3px; display: flex; align-items: center; justify-content: center; background: #f4f9fe; }
.navlist { padding-top: 3px; }
.navlist li { height: 24px; display: flex; align-items: center; white-space: nowrap; }
.ni { padding-left: 8px; gap: 6px; }
.ni.on { background: #c6d8f0; height: 21px; margin: 1px 22px 2px 5px; padding-left: 3px; }

.mid { width: 280px; flex: none; padding-left: 4px; display: flex; flex-direction: column; background: #f0f0f0; }
.plist { height: 334px; flex: none; display: flex; flex-direction: column; border-right: 1px solid #c8c8c8; margin-bottom: 5px; width: 276px; }
.props { flex: 1; min-height: 0; display: flex; flex-direction: column; width: 276px; border-right: 1px solid #c8c8c8; overflow: hidden; }
.ptabs { height: 22px; background: #eee; display: flex; flex: none; border-bottom: 1px solid #c8c8c8; padding-left: 1px; }
.ptab { width: 65px; background: #d9d9d9; color: #888; text-align: center; line-height: 23px; font-weight: 500; border-right: 1px solid #c8c8c8; }
.ptab.on { background: #eee; color: #222; }
.ptools { height: 29px; flex: none; background: #eee; display: flex; align-items: center; gap: 8px; padding: 2px 0 0 7px; }
.pt { display: flex; align-items: center; gap: 5px; white-space: nowrap; }
.pt .cr { margin-left: 1px; margin-right: 0; }
.more { margin-left: auto; margin-right: 3px; font-size: 8px; color: #333; }
.search { height: 20px; flex: none; background: #fff; border-bottom: 1px solid #c8c8c8; color: #9a9a9a; display: flex; align-items: center; justify-content: space-between; padding: 0 6px 0 2px; }
.tree { flex: 1; min-height: 0; position: relative; background: #fff; border: 1px solid #aaa; border-top: 0; overflow: hidden; }
.treelist { padding-top: 2px; }
.treelist li { height: 24px; display: flex; align-items: center; white-space: nowrap; }
.l0 { padding-left: 9px; }
.l1 { padding-left: 29px; }
.l2 { padding-left: 60px; }
.l2 span { height: 21px; line-height: 21px; padding: 0 3px; width: 63px; }
.l2.on span { background: #b0caeb; }
.tri { width: 14px; font: 7px "DejaVu Sans", sans-serif; color: #333; }
.thumb { background: #cdcdcd; border-radius: 4px; width: 8px; }
.t1 { position: absolute; top: 15px; right: 3px; height: 38px; }

.propwrap { display: flex; flex: 1; min-height: 0; background: #fff; }
.ptable { border-collapse: collapse; table-layout: fixed; width: 258px; flex: none; align-self: flex-start; }
.pc1 { width: 22px; } .pc2 { width: 101px; } .pc3 { width: 135px; }
.ptable th, .ptable td { height: 21px; padding: 0 3px; border: 1px solid #d0d0d0; font-weight: 400; white-space: nowrap; overflow: hidden; color: #1c1c1c; }
.ptable th { background: #eee; color: #444; text-align: center; }
.ptable th.val { background: #7eb8f5; color: #fff; }
.ptable .n { background: #eee; text-align: center; padding: 0; }
.ptable .n.cur { background: #7eb8f5; color: #fff; font-weight: 700; }
.ptable .lk { color: #3a6fd8; }
.ptable .edit { border: 2px solid #808080; }
.rb { font-size: 9px; vertical-align: 3px; margin: 0 1px; }
.track { width: 17px; flex: none; padding: 15px 0 0 6px; }
.t2 { height: 343px; }

.split { width: 5px; flex: none; background: #eee; padding-top: 244px; margin-left: -1px; }
.grip { display: block; height: 100px; background: #5d6772; }

.view { flex: 1; min-width: 0; display: flex; flex-direction: column; background: #fff; }
.cad { width: 998px; height: 587px; display: block; flex: none; }
.grid path { stroke: #0b7a0b; fill: none; }
.bg { fill: #2bdc2b; }
.bp { fill: #8f00ff; }
.bb { fill: #1070ff; stroke: #7fc0ff; }
.bw { fill: #f7f7f7; }
.redd { stroke: #a80000; fill: none; }
.redb { stroke: #ff3030; fill: none; }
.ticks { stroke: #ff0000; stroke-width: 1.500; fill: none; }
.wl { stroke: #fff; stroke-width: 1.500; fill: none; }
.tri-y { fill: #ffff00; }
.ax text { font: 20px "Liberation Sans", sans-serif; fill: #fff; mix-blend-mode: difference; }
.dimt text { font: 27px "Liberation Sans", sans-serif; fill: #fff; mix-blend-mode: difference; }
.big06 text { font: 37px "Liberation Sans", sans-serif; fill: #fff; }
.axg { stroke: #00ff00; stroke-width: 3; }
.axgf { fill: #00ff00; }
.axr { stroke: #ff0000; stroke-width: 3; }
.axrf { fill: #ff0000; }
.axb { fill: #0000b0; }
.lblg { font: 16px "Liberation Sans", sans-serif; fill: #00ff00; }
.lblr { font: 16px "Liberation Sans", sans-serif; fill: #ff0000; }

.hbar { height: 4px; flex: none; background: #fff; padding-left: 546px; }
.hgrip { display: block; width: 100px; height: 4px; background: #6b7885; }
.band2 { height: 11px; flex: none; background: #d2d5da; }
.bt-title { height: 22px; flex: none; background: #eee; border-bottom: 1px solid #ccc; line-height: 24px; padding-left: 9px; color: #777; }
.bt-tools { height: 29px; flex: none; background: #eee; border-bottom: 1px solid #ccc; display: flex; align-items: center; gap: 8px; padding: 2px 0 0 6px; white-space: nowrap; }
.bt-tools .off { color: #bbb; }
.bt-wrap { flex: 1; min-height: 0; overflow: hidden; padding-left: 1px; background: #fff; }
.btable { border-collapse: collapse; table-layout: fixed; width: 1019px; }
.w7 { width: 7px; } .w60 { width: 60px; } .w61 { width: 61px; } .w81 { width: 81px; } .w82 { width: 82px; } .w80 { width: 80px; } .w101 { width: 101px; }
.btable th, .btable td { border: 1px solid #d0d0d0; font-weight: 400; padding: 0 2px; white-space: nowrap; overflow: hidden; color: #222; }
.btable th { background: #eee; color: #333; text-align: center; line-height: 15px; padding-top: 1px; }
.btable th.rs { padding-top: 3px; }
.hd1 th, .hd2 th { height: 17px; }
.dr td { height: 21px; background: #fff; padding-left: 4px; }
.btable .rn { padding: 0; background: #eee; }
.btable .pos { white-space: normal; word-break: break-all; line-height: 21px; padding-left: 2px; }
.btable .up { vertical-align: top; padding-top: 2px; }

.mark { position: absolute; border: 3px solid #f01c12; border-radius: 2px; pointer-events: none; }
.m1 { left: 1219px; top: 32px; width: 121px; height: 47px; }
.m2 { left: 883px; top: 455px; width: 136px; height: 180px; }
.m3 { left: 218px; top: 719px; width: 167px; height: 71px; }
.m4 { left: 753px; top: 829px; width: 231px; height: 62px; }
```
